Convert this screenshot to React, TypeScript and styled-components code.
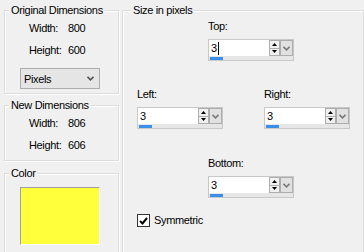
import styled, { createGlobalStyle } from 'styled-components';

const GlobalStyle = createGlobalStyle`
  html, body {
    margin: 0;
    padding: 0;
    background: #f0f0f0;
    overflow: hidden;
  }
  body {
    font-family: 'Liberation Sans', Arial, sans-serif;
    font-size: 11px;
    letter-spacing: -0.35px;
    color: #000;
  }
`;

const Page = styled.div`
  display: flex;
  align-items: flex-start;
  gap: 3px;
  padding: 4px 0 0 4px;
  width: 364px;
  height: 252px;
  box-sizing: border-box;
`;

const Column = styled.div`
  display: flex;
  flex-direction: column;
  width: 115px;
`;

const Group = styled.fieldset<{ $w: number; $h: number; $top?: number }>`
  margin: ${p => p.$top ?? 0}px 0 0 0;
  padding: 0;
  min-width: 0;
  width: ${p => p.$w}px;
  height: ${p => p.$h}px;
  box-sizing: border-box;
  border: 1px solid #dcdcdc;
  box-shadow: inset 1px 1px 0 #fff, 1px 1px 0 #fff;
  flex-shrink: 0;
`;

const Legend = styled.legend<{ $indent: number }>`
  margin-left: ${p => p.$indent}px;
  padding: 0 2px;
  line-height: 13px;
  background: #f0f0f0;
`;

const InfoGrid = styled.div`
  display: grid;
  grid-template-columns: 39px auto;
  grid-auto-rows: 22px;
  align-items: center;
  padding-left: 24px;
`;

const Select = styled.div`
  margin: 7px 0 0 15px;
  width: 80px;
  height: 21px;
  box-sizing: border-box;
  border: 1px solid #adadad;
  background: #e5e5e5;
  display: flex;
  align-items: center;
  justify-content: space-between;
  padding: 0 5px 0 3px;
`;

const Swatch = styled.div<{ $color: string }>`
  margin: 7px 0 0 15px;
  width: 80px;
  height: 58px;
  box-sizing: border-box;
  background: ${p => p.$color};
  border-top: 1px solid #a0a0a0;
  border-left: 1px solid #a0a0a0;
  border-right: 1px solid #fff;
  border-bottom: 1px solid #fff;
`;

const SizeBody = styled.div`
  display: flex;
  flex-direction: column;
  padding: 3px 0 0 14px;
`;

const Row = styled.div<{ $top: number; $left?: number }>`
  display: flex;
  gap: 41px;
  margin-top: ${p => p.$top}px;
  padding-left: ${p => p.$left ?? 0}px;
`;

const Field = styled.div`
  display: flex;
  flex-direction: column;
  gap: 6px;
`;

const Label = styled.span`
  line-height: 13px;
`;

const SpinBox = styled.div`
  width: 86px;
  height: 22px;
  box-sizing: border-box;
  border: 1px solid #c8c8c8;
  display: flex;
  flex-direction: column;
`;

const SpinField = styled.div`
  display: flex;
  height: 16px;
  background: #fff;
`;

const Value = styled.div`
  flex: 1;
  display: flex;
  align-items: center;
  padding-left: 2px;
  line-height: 13px;
`;

const Caret = styled.span`
  display: inline-block;
  width: 1px;
  height: 13px;
  background: #000;
  margin-left: 1px;
`;

const Arrows = styled.div`
  width: 11px;
  box-sizing: border-box;
  border: 1px solid #adadad;
  display: flex;
  flex-direction: column;
  background: #f0f0f0;
`;

const ArrowHalf = styled.div<{ $down?: boolean }>`
  flex: 1;
  display: flex;
  align-items: center;
  justify-content: center;
  border-top: ${p => (p.$down ? '1px solid #adadad' : 'none')};
`;

const DropButton = styled.div`
  width: 13px;
  box-sizing: border-box;
  border: 1px solid #adadad;
  background: #e1e1e1;
  display: flex;
  align-items: center;
  justify-content: center;
`;

const Track = styled.div`
  flex: 1;
  background: #e6e6e6;
  padding: 1px 0 0 1px;
`;

const Fill = styled.div`
  height: 3px;
  background: #3b8fe8;
`;

const CheckRow = styled.label`
  display: flex;
  align-items: center;
  gap: 4px;
  margin-top: 16px;
  line-height: 13px;
`;

const CheckBox = styled.span`
  width: 13px;
  height: 13px;
  box-sizing: border-box;
  border: 1px solid #333;
  background: #fff;
  display: flex;
  align-items: center;
  justify-content: center;
`;

const Chevron = ({ color = '#606060' }: { color?: string }) => (
  <svg width="7" height="5" viewBox="0 0 7 5">
    <path d="M0.5 0.8 L3.5 3.8 L6.5 0.8" fill="none" stroke={color} strokeWidth="1.6" />
  </svg>
);

const Triangle = ({ down }: { down?: boolean }) => (
  <svg width="5" height="3" viewBox="0 0 5 3">
    <path d={down ? 'M0 0 H5 L2.5 3 Z' : 'M0 3 H5 L2.5 0 Z'} fill="#000" />
  </svg>
);

function SpinControl({ value, focused }: { value: string; focused?: boolean }) {
  return (
    <SpinBox>
      <SpinField>
        <Value>
          {value}
          {focused && <Caret />}
        </Value>
        <Arrows>
          <ArrowHalf>
            <Triangle />
          </ArrowHalf>
          <ArrowHalf $down>
            <Triangle down />
          </ArrowHalf>
        </Arrows>
        <DropButton>
          <Chevron color="#7a7a7a" />
        </DropButton>
      </SpinField>
      <Track>
        <Fill style={{ width: 13 }} />
      </Track>
    </SpinBox>
  );
}

export default function App() {
  return (
    <>
      <GlobalStyle />
      <Page>
        <Column>
          <Group $w={115} $h={90}>
            <Legend $indent={4}>Original Dimensions</Legend>
            <InfoGrid>
              <span>Width:</span>
              <span>800</span>
              <span>Height:</span>
              <span>600</span>
            </InfoGrid>
            <Select>
              <span>Pixels</span>
              <Chevron color="#555" />
            </Select>
          </Group>

          <Group $w={115} $h={62} $top={5}>
            <Legend $indent={4}>New Dimensions</Legend>
            <InfoGrid>
              <span>Width:</span>
              <span>806</span>
              <span>Height:</span>
              <span>606</span>
            </InfoGrid>
          </Group>

          <Group $w={115} $h={92} $top={6}>
            <Legend $indent={4}>Color</Legend>
            <Swatch $color="#ffff3c" />
          </Group>
        </Column>

        <Group $w={242} $h={260}>
          <Legend $indent={8}>Size in pixels</Legend>
          <SizeBody>
            <Row $top={0} $left={71}>
              <Field>
                <Label>Top:</Label>
                <SpinControl value="3" focused />
              </Field>
            </Row>
            <Row $top={27}>
              <Field>
                <Label>Left:</Label>
                <SpinControl value="3" />
              </Field>
              <Field>
                <Label>Right:</Label>
                <SpinControl value="3" />
              </Field>
            </Row>
            <Row $top={28} $left={71}>
              <Field>
                <Label>Bottom:</Label>
                <SpinControl value="3" />
              </Field>
            </Row>
            <CheckRow>
              <CheckBox>
                <svg width="9" height="8" viewBox="0 0 9 8">
                  <path d="M1 4 L3.5 6.5 L8 1" fill="none" stroke="#000" strokeWidth="2" />
                </svg>
              </CheckBox>
              Symmetric
            </CheckRow>
          </SizeBody>
        </Group>
      </Page>
    </>
  );
}
